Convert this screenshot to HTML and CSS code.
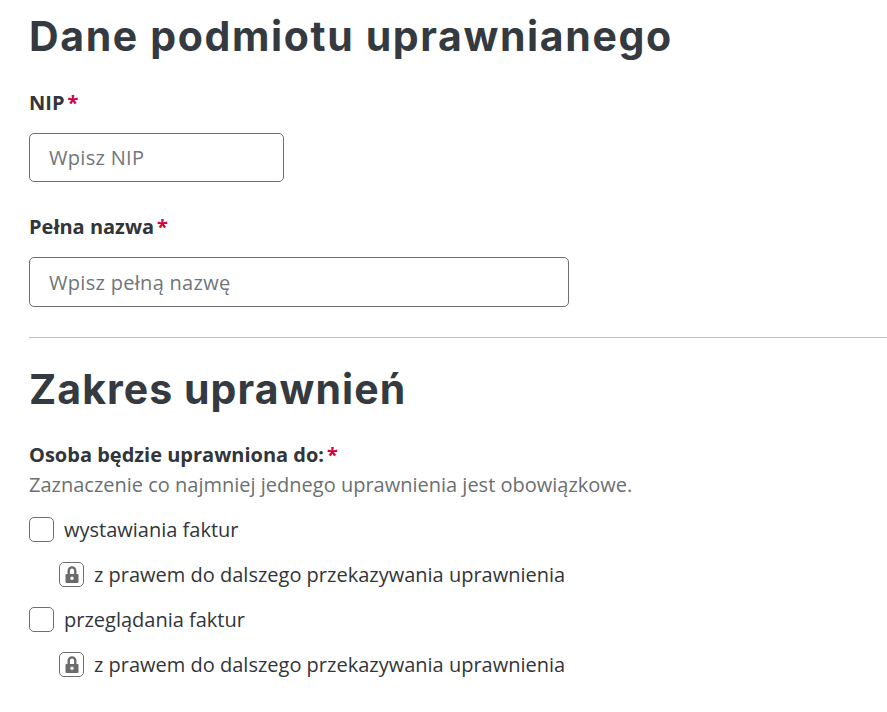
FILE: index.html
```html
<!DOCTYPE html>
<html lang="pl">
<head>
    <meta charset="UTF-8">
    <meta name="viewport" content="width=device-width, initial-scale=1.0">
    <title>Dane podmiotu uprawnianego</title>
    <link rel="stylesheet" href="styles.css">
</head>
<body>

<main class="page">
    <h1>Dane podmiotu uprawnianego</h1>

    <div class="field field-nip">
        <label for="nip">NIP<span class="req">*</span></label>
        <input type="text" id="nip" class="input input-short" placeholder="Wpisz NIP">
    </div>
    <div class="field field-name">
        <label for="fullName">Pełna nazwa<span class="req">*</span></label>
        <input type="text" id="fullName" class="input input-long" placeholder="Wpisz pełną nazwę">
    </div>

    <hr class="divider">

    <h1 class="section-title">Zakres uprawnień</h1>

    <p class="group-label">Osoba będzie uprawniona do:<span class="req">*</span></p>
    <p class="hint">Zaznaczenie co najmniej jednego uprawnienia jest obowiązkowe.</p>

    <div class="check-row">
        <span class="box"></span>
        <span>wystawiania faktur</span>
    </div>
    <div class="check-row sub">
        <span class="box box-locked">
            <svg viewBox="0 0 16 17" width="16" height="17"><path d="M4.7 9V4.7a3.3 3.3 0 0 1 6.6 0V9" fill="none" stroke="#6b6b6b" stroke-width="2.4"/><rect x="1.5" y="8" width="13" height="9" rx="1" fill="#6b6b6b"/><circle cx="8" cy="12.3" r="1.7" fill="#fff"/></svg>
        </span>
        <span>z prawem do dalszego przekazywania uprawnienia</span>
    </div>
    <div class="check-row">
        <span class="box"></span>
        <span>przeglądania faktur</span>
    </div>
    <div class="check-row sub">
        <span class="box box-locked">
            <svg viewBox="0 0 16 17" width="16" height="17"><path d="M4.7 9V4.7a3.3 3.3 0 0 1 6.6 0V9" fill="none" stroke="#6b6b6b" stroke-width="2.4"/><rect x="1.5" y="8" width="13" height="9" rx="1" fill="#6b6b6b"/><circle cx="8" cy="12.3" r="1.7" fill="#fff"/></svg>
        </span>
        <span>z prawem do dalszego przekazywania uprawnienia</span>
    </div>
</main>

</body>
</html>
```

FILE: styles.css
```css
html, body {
    margin: 0;
    padding: 0;
    background: #fff;
    overflow: hidden;
}
body {
    font-family: "Open Sans", sans-serif;
    font-size: 20px;
    color: #323539;
}
.page {
    padding: 10px 0 0 29px;
}
h1 {
    margin: 0;
    font-family: Inter, sans-serif;
    font-size: 41px;
    line-height: 52px;
    font-weight: 700;
    letter-spacing: 1.63px;
    color: #343a40;
}
.field label {
    display: block;
    font-weight: 700;
    line-height: 27px;
}
.field-nip {
    margin-top: 27px;
}
.field-name {
    margin-top: 31px;
}
.req {
    color: #d1003f;
    margin-left: 3px;
    line-height: 1;
}
.input {
    display: block;
    box-sizing: border-box;
    margin-top: 17px;
    padding: 0 19px;
    height: 49px;
    border: 1px solid #6f6f6f;
    border-radius: 5px;
    background: #fff;
    font-family: "Open Sans", sans-serif;
    font-size: 20px;
    letter-spacing: 0.3px;
    color: #323539;
}
.input::placeholder {
    color: #70757a;
    opacity: 1;
}
.input-short {
    width: 255px;
}
.input-long {
    width: 540px;
    height: 50px;
}
.divider {
    margin: 30px 0 0 0;
    border: 0;
    border-top: 1px solid #c4c4c4;
}
.section-title {
    margin-top: 25px;
    letter-spacing: 1.06px;
}
.group-label {
    margin: 26px 0 0 0;
    font-weight: 700;
    line-height: 27px;
}
.hint {
    margin: 4px 0 0 0;
    line-height: 25px;
    color: #6b6f73;
}
.check-row {
    display: flex;
    align-items: center;
    gap: 10px;
    height: 25px;
    margin-top: 20px;
}
.check-row.sub {
    padding-left: 30px;
}
.box {
    box-sizing: border-box;
    display: flex;
    align-items: center;
    justify-content: center;
    width: 25px;
    height: 25px;
    border: 1px solid #6f6f6f;
    border-radius: 5px;
    background: #fff;
    flex-shrink: 0;
}
```
